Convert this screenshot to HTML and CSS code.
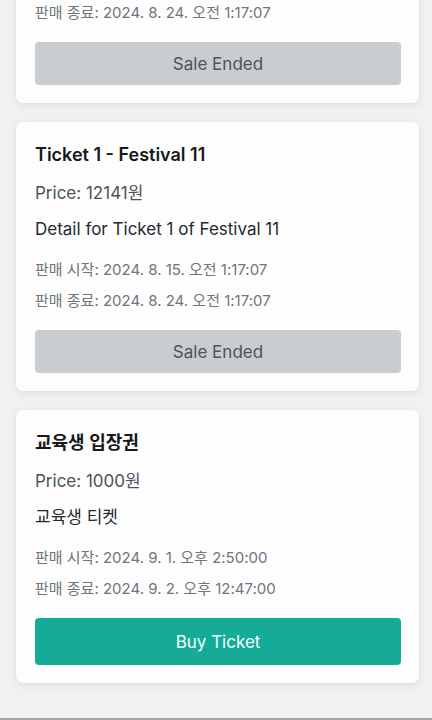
FILE: index.html
```html
<!DOCTYPE html>
<html lang="ko">
<head>
<meta charset="utf-8">
<title>Tickets</title>
<link rel="stylesheet" href="styles.css">
</head>
<body>
<main class="list">
  <section class="card">
    <h2 class="title">Ticket 0 - Festival 11</h2>
    <p class="price">Price: 12141원</p>
    <p class="detail">Detail for Ticket 0 of Festival 11</p>
    <p class="date date-start">판매 시작: 2024. 8. 15. 오전 1:17:07</p>
    <p class="date">판매 종료: 2024. 8. 24. 오전 1:17:07</p>
    <button class="btn btn-ended" disabled>Sale Ended</button>
  </section>
  <section class="card">
    <h2 class="title">Ticket 1 - Festival 11</h2>
    <p class="price">Price: 12141원</p>
    <p class="detail">Detail for Ticket 1 of Festival 11</p>
    <p class="date date-start">판매 시작: 2024. 8. 15. 오전 1:17:07</p>
    <p class="date">판매 종료: 2024. 8. 24. 오전 1:17:07</p>
    <button class="btn btn-ended" disabled>Sale Ended</button>
  </section>
  <section class="card">
    <h2 class="title">교육생 입장권</h2>
    <p class="price">Price: 1000원</p>
    <p class="detail">교육생 티켓</p>
    <p class="date date-start">판매 시작: 2024. 9. 1. 오후 2:50:00</p>
    <p class="date">판매 종료: 2024. 9. 2. 오후 12:47:00</p>
    <button class="btn btn-buy">Buy Ticket</button>
  </section>
</main>
<div class="bottom-line"></div>
</body>
</html>
```

FILE: styles.css
```css
* { box-sizing: border-box; }
html, body {
  margin: 0;
  padding: 0;
  background: #f0f1f3;
}
body {
  font-family: Inter, "Noto Sans CJK KR", sans-serif;
  color: #1f2328;
}
.list {
  display: flex;
  flex-direction: column;
  gap: 19px;
  margin-top: -166px;
  padding: 0 13px 40px 16px;
}
.card {
  background: #fdfdfe;
  border-radius: 7px;
  box-shadow: 0 2px 8px rgba(0, 0, 0, 0.08), 0 0 2px rgba(0, 0, 0, 0.04);
  padding: 19px 18px 18px 19px;
  display: flex;
  flex-direction: column;
}
.title {
  margin: 0;
  font-size: 18px;
  line-height: 28px;
  font-weight: 600;
  color: #16181b;
}
.price {
  margin: 12px 0 0;
  font-size: 17px;
  line-height: 24px;
  color: #4d535b;
}
.detail {
  margin: 12px 0 0;
  font-size: 17px;
  line-height: 24px;
  color: #25292e;
}
.date {
  margin: 11px 0 0;
  font-size: 15px;
  line-height: 20px;
  color: #6f757d;
}
.date-start { margin-top: 19px; }
.btn {
  margin-top: 19px;
  border: none;
  border-radius: 4px;
  font-family: Inter, "Noto Sans CJK KR", sans-serif;
  font-size: 17px;
}
.btn-ended {
  height: 43px;
  background: #c9ccd1;
  color: #4e545c;
}
.btn-buy {
  height: 47px;
  background: #15ab96;
  color: #f4fffc;
}
.bottom-line {
  position: fixed;
  left: 0;
  right: 0;
  bottom: 0;
  height: 2px;
  background: #a5a7aa;
}
```
